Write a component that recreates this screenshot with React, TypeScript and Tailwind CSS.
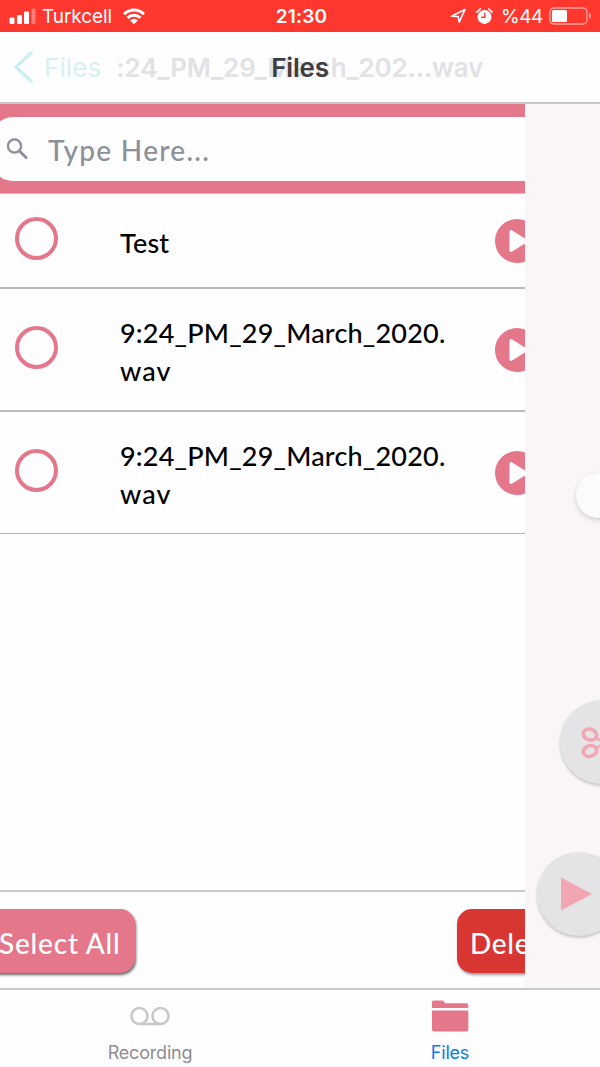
import React from "react";

const files = [
  { name: [{ text: "Test", spacing: "tracking-[0.2px]" }], row: "h-[95px] border-b-2 pb-[1px]", ring: "mt-[23px]", text: "mt-[30px]", play: "mt-[25px]" },
  { name: [{ text: "9:24_PM_29_March_2020.", spacing: "tracking-[0.2px]" }, { text: "wav", spacing: "tracking-[1.1px]" }], row: "h-[123px] border-b-2", ring: "mt-[37px]", text: "mt-[25px]", play: "mt-[39px]" },
  { name: [{ text: "9:24_PM_29_March_2020.", spacing: "tracking-[0.2px]" }, { text: "wav", spacing: "tracking-[1.1px]" }], row: "h-[122px] border-b", ring: "mt-[37px]", text: "mt-[25px]", play: "mt-[39px]" },
];

function StatusBar() {
  return (
    <header className="flex h-8 shrink-0 items-center bg-[#ff382f] text-white">
      <div className="flex flex-1 items-center pl-[9px]">
        <svg className="mt-px h-[17px] w-[28px]" viewBox="0 0 28 17" fill="white">
          <rect x="0.5" y="9.5" width="5" height="6.5" rx="1.3" />
          <rect x="8" y="7" width="5" height="9" rx="1.3" />
          <rect x="15" y="3.5" width="5" height="12.5" rx="1.3" />
          <rect x="22.5" y="0.5" width="4" height="15.5" rx="1.3" opacity="0.35" />
        </svg>
        <span className="mt-[2px] ml-[5px] w-[70px] text-[19px] leading-[30px] tracking-[-0.1px]">Turkcell</span>
        <svg className="ml-[10px] h-[17px] w-[24px]" viewBox="0 0 24 17" fill="white">
          <path d="M1 5.2A15.5 15.5 0 0 1 23 5.2L20.9 7.3A12.6 12.6 0 0 0 3.1 7.3Z" />
          <path d="M4.6 8.8a10.5 10.5 0 0 1 14.8 0l-2.1 2.1a7.5 7.5 0 0 0-10.6 0Z" />
          <path d="M8.2 12.4a5.4 5.4 0 0 1 7.6 0L12 16.2Z" />
        </svg>
      </div>
      <span className="mt-[2px] ml-[2px] text-[19px] leading-[30px] font-semibold tracking-[0.2px]">21:30</span>
      <div className="flex flex-1 items-center justify-end pr-[8px]">
        <svg className="h-[16px] w-[17px]" viewBox="0 0 17 16" fill="none" stroke="white" strokeWidth="1.6" strokeLinejoin="round">
          <path d="M15 1.5 1.5 8.2 8.2 8.5 9.2 14.2Z" />
        </svg>
        <svg className="ml-[9px] h-[17px] w-[17px]" viewBox="0 0 17 17">
          <circle cx="8.5" cy="8.9" r="7" fill="white" />
          <path d="M1 4.2 4.2 1M16 4.2 12.8 1" stroke="white" strokeWidth="1.7" strokeLinecap="round" />
          <path d="M8.8 4.8V9.3H5.2" fill="none" stroke="#ff382f" strokeWidth="1.4" />
        </svg>
        <span className="mt-[2px] ml-[8px] text-[19px] leading-[30px] tracking-[-0.4px]">%44</span>
        <svg className="ml-[6px] h-[18px] w-[43px]" viewBox="0 0 43 18">
          <rect x="1" y="1" width="37" height="16" rx="4" fill="none" stroke="white" strokeOpacity="0.55" strokeWidth="1.3" />
          <rect x="3" y="3" width="15" height="12" rx="1.5" fill="white" />
          <path d="M40 6q2.2 1 2.2 3t-2.2 3Z" fill="white" fillOpacity="0.55" />
        </svg>
      </div>
    </header>
  );
}

function NavBar() {
  return (
    <nav className="relative flex h-[72px] shrink-0 items-center border-b-2 border-[#c9c5c9] bg-[#fefdff]">
      <svg className="ml-[13px] h-[34px] w-[21px]" viewBox="0 0 21 34" fill="none" stroke="#ceeff2" strokeWidth="3.3">
        <path d="M19 2 3 17 19 32" />
      </svg>
      <span className="mt-[2px] ml-[10px] text-[26px] leading-8 tracking-[0.1px] text-[#d8f0f3]">Files</span>
      <span className="mt-[2px] ml-[15px] text-[26px] leading-8 font-semibold tracking-[-0.14px] text-[#e2e1e4]">:24_PM_29_March_202...wav</span>
      <h1 className="absolute inset-x-0 mt-[2px] text-center text-[26px] leading-8 font-semibold tracking-[-0.2px] text-[#3d3c40]">Files</h1>
    </nav>
  );
}

function PlayBadge({ className }: { className: string }) {
  return (
    <svg className={"h-[44px] w-[44px] shrink-0 " + className} viewBox="0 0 44 44">
      <circle cx="22" cy="22" r="22" fill="#e47789" />
      <path d="M16 12.5 31 22 16 31.5Z" fill="#fefdff" stroke="#fefdff" strokeWidth="3" strokeLinejoin="round" />
    </svg>
  );
}

function FilesPanel() {
  return (
    <main className="flex w-[525px] shrink-0 flex-col overflow-hidden bg-[#fefdff] font-[Lato,sans-serif]">
      <div className="h-[90px] shrink-0 border-b border-[#c5c0c4] bg-[#e47789] pt-[13px]">
        <div className="-ml-[9px] flex h-16 w-[620px] items-center rounded-[22px] bg-[#fefdff]">
          <svg className="ml-[15px] h-[22px] w-[23px]" viewBox="0 0 23 22" fill="none" stroke="#8b9099" strokeWidth="2.3">
            <circle cx="8.5" cy="8" r="6.6" />
            <path d="M13.4 12.9 21 20.5" strokeWidth="2.8" />
          </svg>
          <span className="mt-[2px] ml-[19px] text-[28px] leading-10 font-medium tracking-[1.3px] text-[#8b9099]">Type Here...</span>
        </div>
      </div>
      {files.map((file, index) => (
        <div key={index} className={"flex shrink-0 items-start border-[#bab8bc] " + file.row}>
          <span className={"ml-[15px] h-[43px] w-[43px] shrink-0 rounded-full border-4 border-[#e47789] " + file.ring} />
          <div className={"ml-[62px] w-[375px] shrink-0 text-[27px] leading-[38px] font-medium text-black " + file.text}>
            {file.name.map((line) => (
              <div key={line.text} className={line.spacing}>{line.text}</div>
            ))}
          </div>
          <PlayBadge className={file.play} />
        </div>
      ))}
      <div className="flex-1" />
      <div className="flex h-[98px] shrink-0 items-start justify-between border-t-2 border-[#cbc9cd] pt-[17px]">
        <button className="-ml-5 h-16 w-[155px] rounded-[15px] bg-[#e47789] pt-[4px] pl-[19px] text-left text-[28px] font-medium whitespace-nowrap tracking-[0.8px] text-white shadow-[1px_2px_3px_rgba(0,0,0,0.6)]">Select All</button>
        <button className="-mr-[52px] h-16 w-[120px] rounded-[15px] bg-[#d83632] pt-[4px] pl-[13px] text-left text-[28px] font-medium whitespace-nowrap tracking-[0.7px] text-white shadow-[1px_2px_3px_rgba(0,0,0,0.4)]">Delete</button>
      </div>
    </main>
  );
}

function PlayerPanel() {
  return (
    <aside className="flex w-[75px] shrink-0 flex-col overflow-hidden bg-[#f9f5f8]">
      <div className="mt-[369px] ml-[51px] h-[45px] w-[45px] shrink-0 rounded-full bg-[#fcfbfc] shadow-[0_2px_5px_rgba(0,0,0,0.16)]" />
      <div className="mt-[182px] ml-[35px] flex h-[84px] w-[84px] shrink-0 items-center rounded-full bg-[#e4e3e6] pl-[21px] shadow-[0_2px_3px_rgba(0,0,0,0.2)]">
        <svg className="mt-[1px] h-[34px] w-[40px] shrink-0" viewBox="0 0 40 34" fill="none" stroke="#f1a7b2" strokeWidth="3.6">
          <ellipse cx="9" cy="8.5" rx="6.8" ry="5.4" transform="rotate(18 9 8.5)" />
          <ellipse cx="9" cy="25" rx="6.8" ry="5.4" transform="rotate(-18 9 25)" />
          <path d="M15 12 38 25M15 22 38 9" strokeWidth="2.2" />
        </svg>
      </div>
      <div className="mt-[68px] ml-[12px] flex h-[84px] w-[84px] shrink-0 items-center rounded-full bg-[#e4e3e6] pl-[24px] shadow-[0_2px_3px_rgba(0,0,0,0.2)]">
        <svg className="h-[34px] w-[32px]" viewBox="0 0 32 34">
          <path d="M0 0.5 31 17 0 33.5Z" fill="#f2a6b1" />
        </svg>
      </div>
    </aside>
  );
}

function TabBar() {
  return (
    <footer className="flex h-[79px] shrink-0 border-t-2 border-[#cbc9cd] bg-[#fefdff]">
      <div className="flex w-[300px] flex-col items-center">
        <svg className="mt-[16px] h-[20px] w-[40px]" viewBox="0 0 40 20" fill="none" stroke="#c9c8cb" strokeWidth="2.6">
          <circle cx="9.5" cy="10" r="8" />
          <circle cx="30.5" cy="10" r="8" />
          <path d="M9.5 18H30.5" />
        </svg>
        <span className="mt-[15px] text-[18px] leading-6 tracking-[-0.2px] text-[#8e8d91]">Recording</span>
      </div>
      <div className="flex w-[300px] flex-col items-center">
        <svg className="mt-[10px] h-[32px] w-[38px]" viewBox="0 0 38 32" fill="#e47789">
          <path d="M1 2Q1 0.5 2.5 0.5H11Q12.3 0.5 13 1.8L14 3.2H35.5Q37.3 3.2 37.3 5V8H1Z" />
          <path d="M1 10.6H37.3V29.5Q37.3 31.5 35.3 31.5H3Q1 31.5 1 29.5Z" />
        </svg>
        <span className="mt-[9px] text-[18px] leading-6 tracking-[-0.2px] text-[#087bea]">Files</span>
      </div>
    </footer>
  );
}

export default function App() {
  return (
    <div className="flex h-[1067px] w-[600px] flex-col overflow-hidden bg-[#fefdff] font-[Inter,sans-serif]">
      <StatusBar />
      <NavBar />
      <div className="flex min-h-0 flex-1">
        <FilesPanel />
        <PlayerPanel />
      </div>
      <TabBar />
    </div>
  );
}
